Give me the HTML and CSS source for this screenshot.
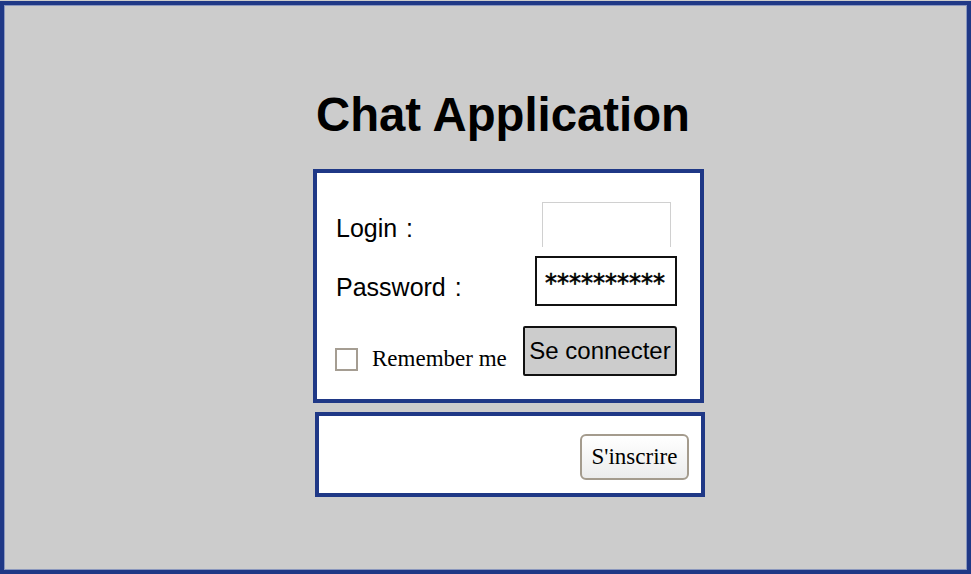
FILE: index.html
```html
<!DOCTYPE html>
<html lang="en">
<head>
<meta charset="utf-8">
<title>Chat Application</title>
<link rel="stylesheet" href="styles.css">
</head>
<body>
<div class="frame">
  <h1 class="title">Chat Application</h1>
  <div class="panel login-panel">
    <div class="row row-login">
      <span class="label label-login">Login :</span>
      <div class="input input-login"></div>
    </div>
    <div class="row row-password">
      <span class="label label-password">Password :</span>
      <div class="input input-password">**********</div>
    </div>
    <div class="row row-actions">
      <span class="checkbox"></span>
      <span class="remember">Remember me</span>
      <button class="btn-connect" type="button">Se connecter</button>
    </div>
  </div>
  <div class="panel signup-panel">
    <button class="btn-signup" type="button">S'inscrire</button>
  </div>
</div>
</body>
</html>
```

FILE: styles.css
```css
html, body {
  margin: 0;
  padding: 0;
  background: #cccccc;
}

.frame {
  box-sizing: border-box;
  width: 971px;
  height: 573px;
  margin-top: 1px;
  border: 4px solid #1f3886;
  box-shadow: inset 0 0 0 1px #8a97bd;
  background: #cccccc;
  display: flex;
  flex-direction: column;
  align-items: flex-start;
}

.title {
  margin: 86px 0 0 312px;
  font-family: "Liberation Sans", Arial, sans-serif;
  font-weight: bold;
  font-size: 47.3px;
  line-height: 1;
  color: #000;
}

.panel {
  box-sizing: border-box;
  background: #fff;
  border: 4px solid #1f3886;
}

.login-panel {
  width: 391px;
  height: 234px;
  margin: 31px 0 0 309px;
  padding: 29px 0 0 18px;
  display: flex;
  flex-direction: column;
}

.row {
  display: flex;
  align-items: flex-start;
}

.row-login {
  height: 45px;
}

.row-password {
  height: 50px;
  margin-top: 9px;
}

.row-actions {
  height: 50px;
  margin-top: 20px;
}

.label {
  margin-left: 1px;
  font-family: "Liberation Sans", Arial, sans-serif;
  font-size: 25px;
  word-spacing: 2px;
  color: #000;
}

.label-login {
  margin-top: 12px;
}

.label-password {
  margin-top: 17px;
}

.input {
  box-sizing: border-box;
  background: #fff;
  margin-left: auto;
}

.input-login {
  width: 129px;
  height: 45px;
  margin-right: 29px;
  border: 1px solid #d0d0d0;
  border-bottom: none;
}

.input-password {
  width: 142px;
  height: 50px;
  margin-right: 23px;
  border: 2px solid #111;
  font-family: "DejaVu Sans", sans-serif;
  font-size: 24px;
  -webkit-text-stroke: 0.6px #000;
  line-height: 1;
  padding: 13px 0 0 8px;
  color: #000;
  overflow: hidden;
  white-space: nowrap;
}

.checkbox {
  box-sizing: border-box;
  width: 23px;
  height: 23px;
  margin-top: 22px;
  border: 2px solid #a59d92;
  background: #fff;
}

.remember {
  margin: 20px 0 0 14px;
  font-family: "Liberation Serif", "Times New Roman", serif;
  font-size: 23px;
  color: #000;
}

.btn-connect {
  box-sizing: border-box;
  width: 154px;
  height: 50px;
  margin: 0 23px 0 auto;
  padding: 0 0 1px 0;
  background: #cccccc;
  border: 2px solid #111;
  border-radius: 2px 3px 2px 2px;
  font-family: "Liberation Sans", Arial, sans-serif;
  font-size: 24px;
  color: #000;
}

.signup-panel {
  width: 390px;
  height: 85px;
  margin: 9px 0 0 311px;
  display: flex;
  justify-content: flex-end;
  align-items: flex-start;
  padding: 18px 12px 0 0;
}

.btn-signup {
  box-sizing: border-box;
  width: 109px;
  height: 46px;
  padding: 0;
  border: 2px solid #a49b8d;
  border-radius: 6px;
  background: linear-gradient(#ffffff, #ececec);
  font-family: "Liberation Serif", "Times New Roman", serif;
  font-size: 23px;
  color: #000;
}
```
